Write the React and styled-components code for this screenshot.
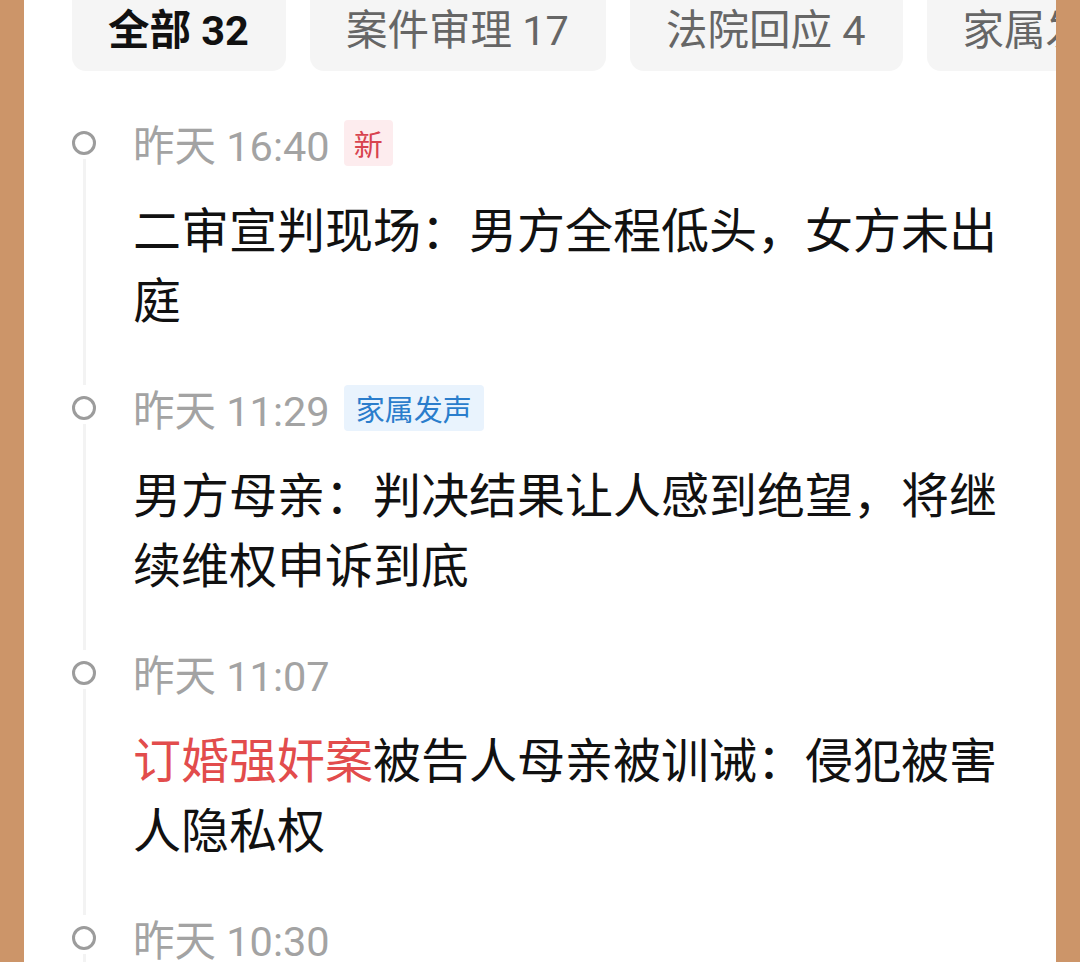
import React from "react";
import styled, { createGlobalStyle } from "styled-components";

const GlobalStyle = createGlobalStyle`
  html, body {
    margin: 0;
    padding: 0;
    background: #cc9569;
  }
  body {
    font-family: Roboto, "Noto Sans CJK SC", "Noto Sans", sans-serif;
    overflow: hidden;
  }
`;

const Panel = styled.div`
  margin: 0 24px;
  min-height: 100vh;
  background: #ffffff;
  overflow: hidden;
  padding: 0 48px;
  box-sizing: border-box;
`;

const TabBar = styled.div`
  display: flex;
  gap: 24px;
  margin-top: -18px;
  margin-right: -48px;
  overflow: hidden;
`;

const Tab = styled.div`
  flex-shrink: 0;
  height: 89px;
  padding: 0 37px 0 36px;
  display: flex;
  align-items: center;
  background: #f5f5f5;
  border-radius: 14px;
  font-size: 41.5px;
  font-weight: ${(p) => (p.$active ? 700 : 400)};
  color: ${(p) => (p.$active ? "#111111" : "#666666")};
  white-space: nowrap;
`;

const Timeline = styled.div`
  margin-top: 49px;
  display: flex;
  flex-direction: column;
`;

const Item = styled.div`
  display: grid;
  grid-template-columns: 24px 1fr;
  column-gap: 37px;
  padding-bottom: 53px;
`;

const Rail = styled.div`
  display: flex;
  flex-direction: column;
  align-items: center;
  padding-top: 11px;
`;

const Dot = styled.div`
  width: 24px;
  height: 24px;
  box-sizing: border-box;
  border: 3px solid #9c9c9c;
  border-radius: 50%;
  flex-shrink: 0;
`;

const Line = styled.div`
  flex: 1;
  width: 3px;
  margin-top: 4px;
  margin-bottom: -53px;
  background: #f3f3f3;
`;

const Content = styled.div`
  display: flex;
  flex-direction: column;
  gap: 26px;
  min-width: 0;
`;

const Meta = styled.div`
  height: 46px;
  display: flex;
  align-items: center;
  gap: 14px;
`;

const Time = styled.span`
  font-size: 41.5px;
  color: #a3a3a3;
  white-space: nowrap;
`;

const Tag = styled.span`
  height: 46px;
  line-height: 46px;
  padding: 0 ${(p) => (p.$tone === "red" ? 10 : 12)}px;
  font-size: 29px;
  border-radius: 4px;
  color: ${(p) => (p.$tone === "red" ? "#d8434f" : "#2a7dcc")};
  background: ${(p) => (p.$tone === "red" ? "#fdecee" : "#e9f3fd")};
  font-family: "Noto Sans CJK SC", sans-serif;
`;

const Title = styled.div`
  font-family: "Noto Sans CJK SC", sans-serif;
  font-size: 48px;
  line-height: 70px;
  color: #111111;
`;

const Hot = styled.span`
  color: #e24c4c;
`;

const tabs = [
  { label: "全部 32", active: true },
  { label: "案件审理 17" },
  { label: "法院回应 4" },
  { label: "家属发声 6" },
];

const items = [
  {
    time: "昨天 16:40",
    tag: { text: "新", tone: "red" },
    title: <>二审宣判现场：男方全程低头，女方未出庭</>,
  },
  {
    time: "昨天 11:29",
    tag: { text: "家属发声", tone: "blue" },
    title: <>男方母亲：判决结果让人感到绝望，将继续维权申诉到底</>,
  },
  {
    time: "昨天 11:07",
    title: (
      <>
        <Hot>订婚强奸案</Hot>被告人母亲被训诫：侵犯被害人隐私权
      </>
    ),
  },
  {
    time: "昨天 10:30",
  },
];

export default function App() {
  return (
    <>
      <GlobalStyle />
      <Panel>
        <TabBar>
          {tabs.map((t) => (
            <Tab key={t.label} $active={t.active}>
              {t.label}
            </Tab>
          ))}
        </TabBar>
        <Timeline>
          {items.map((it) => (
            <Item key={it.time}>
              <Rail>
                <Dot />
                <Line />
              </Rail>
              <Content>
                <Meta>
                  <Time>{it.time}</Time>
                  {it.tag && <Tag $tone={it.tag.tone}>{it.tag.text}</Tag>}
                </Meta>
                {it.title && <Title>{it.title}</Title>}
              </Content>
            </Item>
          ))}
        </Timeline>
      </Panel>
    </>
  );
}
